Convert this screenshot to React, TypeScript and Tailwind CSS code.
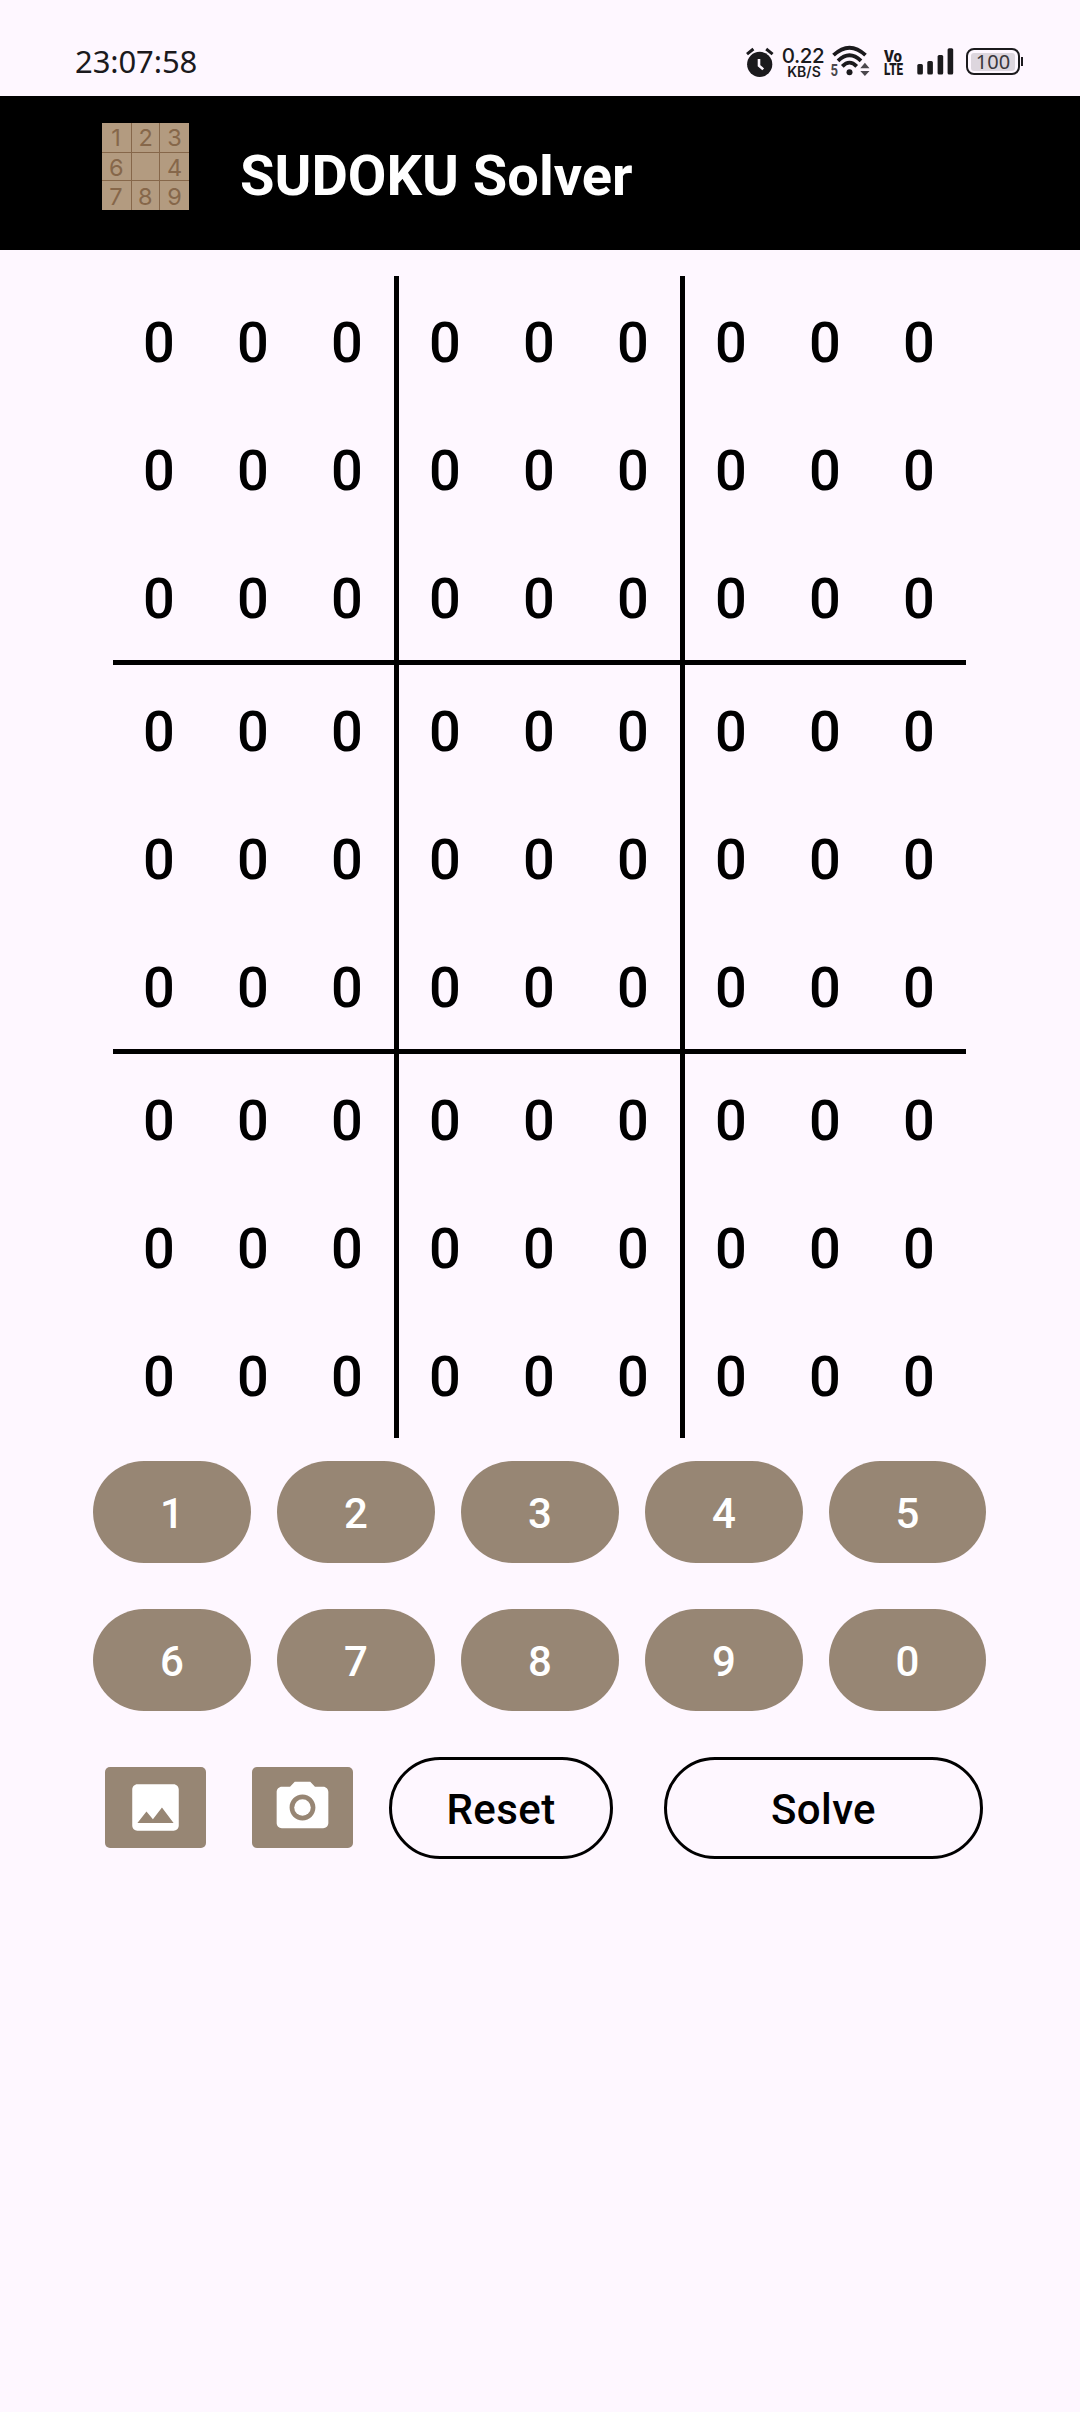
import React from "react";

const LOGO_DIGITS: [string, number, number][] = [
  ["1", 14, 23], ["2", 43.7, 23], ["3", 72.5, 23],
  ["6", 14.3, 52.5], ["4", 72.5, 52.5],
  ["7", 14, 81.5], ["8", 43.3, 81.5], ["9", 72.5, 81.5],
];

function StatusBar() {
  return (
    <div className="flex h-24 items-start text-[#1b1a1d]">
      <div className="ml-[75px] mt-[40px] w-[130px] whitespace-nowrap font-['Noto_Sans',sans-serif] text-[31px] leading-[42px] tracking-[-0.1px]">
        23:07:58
      </div>
      <svg className="ml-[541px] mt-[47px] h-[31px] w-[28px]" viewBox="0 0 28 31">
        <circle cx="13.7" cy="17.3" r="12.6" fill="currentColor" />
        <path d="M1 7.2L7.4 2M20.2 2L26.6 7.2" stroke="currentColor" strokeWidth="3" fill="none" />
        <path d="M13 12v6.6l4.2 3.8" stroke="#fef7ff" strokeWidth="2.6" fill="none" />
      </svg>
      <div className="ml-[7px] mt-[46px] flex w-[44px] flex-col items-center whitespace-nowrap font-['Inter',sans-serif]">
        <span className="text-[20.5px] font-medium leading-[20px] tracking-[-0.4px]">0.22</span>
        <span className="pl-[2px] text-[14px] font-semibold leading-[12px]">KB/S</span>
      </div>
      <svg className="ml-[5px] mt-[44px] h-[38px] w-[42px]" viewBox="0 0 42 38">
        <g fill="none" stroke="currentColor" strokeWidth="3.8">
          <path d="M3.5 11.2Q19.5 -3.8 35.5 11.2" />
          <path d="M8 16.8Q19.5 5.8 31 16.8" />
          <path d="M12.3 22.4Q19.5 15 26.7 22.4" />
        </g>
        <circle cx="19.5" cy="28.3" r="3" fill="currentColor" />
        <path d="M30.3 24.3l4.6-5.5 4.6 5.5zM30.3 27l4.6 5 4.6-5z" fill="#4b484d" />
        <text x="0.5" y="31.6" fill="#4b484d" fontSize="16" fontWeight="700" textLength="7.5" lengthAdjust="spacingAndGlyphs" fontFamily="Roboto, sans-serif">5</text>
      </svg>
      <svg className="ml-[11px] mt-[40px] h-[42px] w-[24px] overflow-visible" viewBox="0 0 24 42" fill="currentColor" fontFamily="Roboto, sans-serif" fontWeight="900">
        <text x="1" y="21.6" fontSize="16.5" textLength="18" lengthAdjust="spacingAndGlyphs">Vo</text>
        <text x="1" y="35" fontSize="16.5" textLength="19" lengthAdjust="spacingAndGlyphs">LTE</text>
      </svg>
      <svg className="ml-[10px] mt-[48px] h-[27px] w-[37px]" viewBox="0 0 37 27" fill="currentColor">
        <rect x="0.3" y="16" width="5.6" height="10.5" rx="1.5" />
        <rect x="10.3" y="13" width="5.6" height="13.5" rx="1.5" />
        <rect x="20.6" y="7" width="5.6" height="19.5" rx="1.5" />
        <rect x="30.6" y="0.3" width="5.6" height="26.2" rx="1.5" />
      </svg>
      <div className="ml-[12px] mt-[48px] flex items-center">
        <div className="flex h-[27px] w-[54px] items-center justify-center rounded-[8px] border-2 border-[#1b1a1d] p-[3px]">
          <div className="flex h-[18px] w-full items-center justify-center rounded-[3px] bg-[#ddd6de] font-['Noto_Sans',sans-serif] text-[20px] leading-[18px] text-[#3a373c]">
            100
          </div>
        </div>
        <div className="ml-px h-[9px] w-[2px] bg-[#1b1a1d]" />
      </div>
    </div>
  );
}

function Header() {
  return (
    <header className="flex h-[154px] items-start bg-black">
      <svg className="ml-[102px] mt-[27px] size-[87px]" viewBox="0 0 87 87">
        <rect width="87" height="87" fill="#b39b80" />
        <path d="M29.5 0V87M57.5 0V87M0 29.5H87M0 57.5H87" stroke="#86674a" strokeWidth="1" />
        {LOGO_DIGITS.map(([d, x, y]) => (
          <text key={d} x={x} y={y} textAnchor="middle" fontFamily="Inter, sans-serif" fontSize="23.5" fill="#86674a">
            {d}
          </text>
        ))}
      </svg>
      <h1 className="ml-[51px] mt-[47px] whitespace-nowrap text-[56px] font-bold leading-[66px] text-white">SUDOKU Solver</h1>
    </header>
  );
}

function Box() {
  return (
    <div className="grid grid-cols-[94px_94px_94px] grid-rows-3">
      {Array.from({ length: 9 }, (_, i) => (
        <div key={i} className="flex h-32 items-center justify-center pr-[2px] pt-[5px] text-[56px] font-medium leading-[66px] text-black">
          0
        </div>
      ))}
    </div>
  );
}

function Board() {
  return (
    <div className="ml-[113px] mt-[26px] grid w-[853px] grid-cols-[281px_281px_281px] gap-[5px] bg-black">
      {Array.from({ length: 9 }, (_, i) => (
        <div key={i} className="bg-[#fef7ff]">
          <Box />
        </div>
      ))}
    </div>
  );
}

function Keypad() {
  return (
    <div className="ml-[93px] mt-[23px] grid w-[893px] grid-cols-[158px_158px_158px_158px_157px] gap-x-[26px] gap-y-[46px]">
      {["1", "2", "3", "4", "5", "6", "7", "8", "9", "0"].map((n) => (
        <button key={n} className="flex h-[102px] items-center justify-center rounded-full bg-[#978674] pt-[3px] text-[42px] font-medium text-white">
          {n}
        </button>
      ))}
    </div>
  );
}

function Actions() {
  return (
    <div className="ml-[105px] mt-[46px] flex h-[102px] items-start">
      <button className="mt-[10px] flex h-[81px] w-[101px] items-center justify-center rounded-[5px] bg-[#978674]">
        <svg className="size-[63px]" viewBox="-0.19 -0.19 24.38 24.38" fill="#fff">
          <path d="M21 19V5c0-1.1-.9-2-2-2H5c-1.1 0-2 .9-2 2v14c0 1.1.9 2 2 2h14c1.1 0 2-.9 2-2zM8.5 13.5l2.5 3.010L14.5 12l4.5 6H5l3.5-4.5z" />
        </svg>
      </button>
      <button className="ml-[46px] mt-[10px] flex h-[81px] w-[101px] items-center justify-center rounded-[5px] bg-[#978674]">
        <svg className="size-[63px]" viewBox="-0.19 -0.19 24.38 24.38" fill="#fff">
          <circle cx="12" cy="12" r="3.2" />
          <path d="M9 2L7.170 4H4c-1.1 0-2 .9-2 2v12c0 1.1.9 2 2 2h16c1.1 0 2-.9 2-2V6c0-1.1-.9-2-2-2h-3.170L15 2H9zm3 15c-2.760 0-5-2.240-5-5s2.240-5 5-5 5 2.240 5 5-2.240 5-5 5z" />
        </svg>
      </button>
      <button className="ml-[36px] flex h-[102px] w-[224px] items-center justify-center rounded-full border-[3px] border-black pt-[3px] text-[42px] font-medium tracking-[0.4px] text-black">
        Reset
      </button>
      <button className="ml-[51px] flex h-[102px] w-[319px] items-center justify-center rounded-full border-[3px] border-black pt-[3px] text-[42px] font-medium tracking-[0.4px] text-black">
        Solve
      </button>
    </div>
  );
}

export default function App() {
  return (
    <div className="h-[2412px] w-[1080px] overflow-hidden bg-[#fef7ff] font-['Roboto',sans-serif]">
      <StatusBar />
      <Header />
      <Board />
      <Keypad />
      <Actions />
    </div>
  );
}
